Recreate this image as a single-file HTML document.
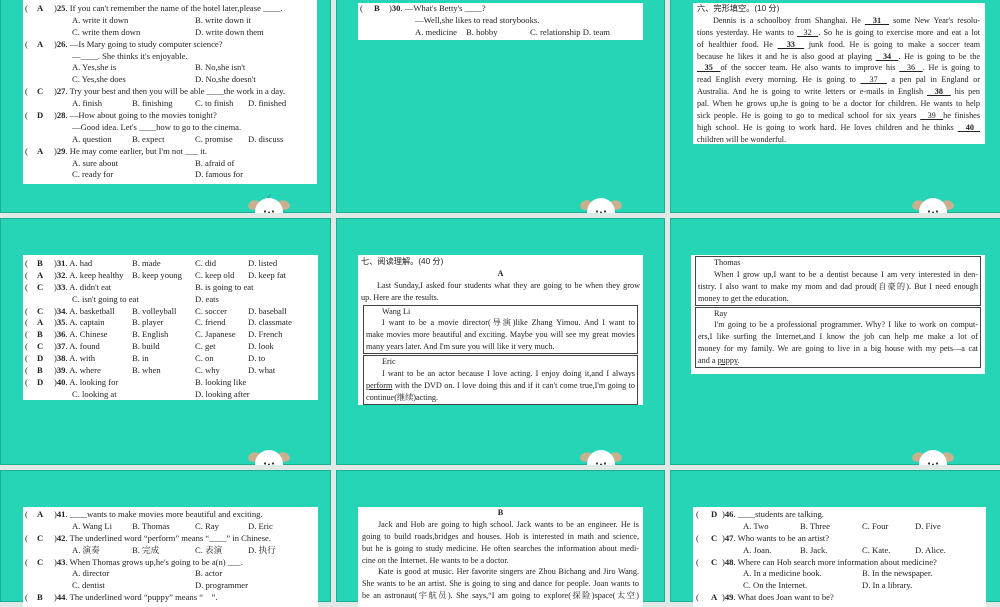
<!DOCTYPE html>
<html><head><meta charset="utf-8"><style>
*{margin:0;padding:0;box-sizing:border-box}
body{width:1000px;height:600px;background:#dfe9e6;position:relative;overflow:hidden;font-family:"Liberation Serif","Noto Serif CJK SC","Noto Sans CJK SC",serif;font-size:8px;color:#222}
.s{position:absolute;background:#26d5b5;border:1px solid #1fae94;overflow:hidden}
.b{position:absolute;background:#fff;padding-top:3px;overflow:hidden}
.r{position:relative;height:11.9px;line-height:11.9px;white-space:nowrap;font-size:8.6px}
.r span{position:absolute;top:0}
.j{height:11.9px;line-height:11.9px;text-align:justify;text-align-last:justify;white-space:nowrap;overflow:hidden;font-size:8.2px}
.n{text-align-last:left}
b{font-weight:bold}
.bx{border:1.5px solid #444;margin:1px 2px 0 2px;padding:0 2px}
.u{text-decoration:underline}
.dog{position:absolute;width:44px;height:18px}
</style></head><body>

<div class="s" style="left:0;top:-2px;width:331px;height:215px"></div>
<div class="s" style="left:336px;top:-2px;width:329px;height:215px"></div>
<div class="s" style="left:670px;top:-2px;width:332px;height:215px"></div>
<div class="s" style="left:0;top:218px;width:331px;height:247px"></div>
<div class="s" style="left:336px;top:218px;width:329px;height:247px"></div>
<div class="s" style="left:670px;top:218px;width:332px;height:247px"></div>
<div class="s" style="left:0;top:470px;width:331px;height:132px"></div>
<div class="s" style="left:336px;top:470px;width:329px;height:132px"></div>
<div class="s" style="left:670px;top:470px;width:332px;height:132px"></div>

<!-- slide1 -->
<div class="b" style="left:23px;top:0;width:294px;height:184px">
<div class="r"><span style="left:2px">(</span><span style="left:14px"><b>A</b></span><span style="left:31px">)<b>25</b>. If you can't remember the name of the hotel later,please ____.</span></div>
<div class="r"><span style="left:49px">A. write it down</span><span style="left:172px">B. write down it</span></div>
<div class="r"><span style="left:49px">C. write them down</span><span style="left:172px">D. write down them</span></div>
<div class="r"><span style="left:2px">(</span><span style="left:14px"><b>A</b></span><span style="left:31px">)<b>26</b>. —Is Mary going to study computer science?</span></div>
<div class="r"><span style="left:49px">—____. She thinks it's enjoyable.</span></div>
<div class="r"><span style="left:49px">A. Yes,she is</span><span style="left:172px">B. No,she isn't</span></div>
<div class="r"><span style="left:49px">C. Yes,she does</span><span style="left:172px">D. No,she doesn't</span></div>
<div class="r"><span style="left:2px">(</span><span style="left:14px"><b>C</b></span><span style="left:31px">)<b>27</b>. Try your best and then you will be able ____the work in a day.</span></div>
<div class="r"><span style="left:49px">A. finish</span><span style="left:109px">B. finishing</span><span style="left:172px">C. to finish</span><span style="left:225px">D. finished</span></div>
<div class="r"><span style="left:2px">(</span><span style="left:14px"><b>D</b></span><span style="left:31px">)<b>28</b>. —How about going to the movies tonight?</span></div>
<div class="r"><span style="left:49px">—Good idea. Let's ____how to go to the cinema.</span></div>
<div class="r"><span style="left:49px">A. question</span><span style="left:109px">B. expect</span><span style="left:172px">C. promise</span><span style="left:225px">D. discuss</span></div>
<div class="r"><span style="left:2px">(</span><span style="left:14px"><b>A</b></span><span style="left:31px">)<b>29</b>. He may come earlier, but I'm not ___ it.</span></div>
<div class="r"><span style="left:49px">A. sure about</span><span style="left:172px">B. afraid of</span></div>
<div class="r"><span style="left:49px">C. ready for</span><span style="left:172px">D. famous for</span></div>
</div>

<!-- slide2 -->
<div class="b" style="left:358px;top:3px;width:285px;height:37px;padding-top:0">
<div class="r"><span style="left:2px">(</span><span style="left:16px"><b>B</b></span><span style="left:31px">)<b>30</b>. —What's Betty's ____?</span></div>
<div class="r"><span style="left:57px">—Well,she likes to read storybooks.</span></div>
<div class="r"><span style="left:57px">A. medicine</span><span style="left:108px">B. hobby</span><span style="left:172px">C. relationship D. team</span></div>
</div>

<!-- slide3 -->
<div class="b" style="left:693px;top:3px;width:292px;height:141px;padding:0 5px 0 4px">
<div class="j n" style="font-family:'Liberation Sans','Noto Sans CJK SC',sans-serif">六、完形填空。(10 分)</div>
<div class="j" style="padding-left:16px">Dennis is a schoolboy from Shanghai. He <b class="u">&nbsp;&nbsp;31&nbsp;&nbsp;</b> some New Year's resolu-</div>
<div class="j">tions yesterday. He wants to <span class="u">&nbsp;&nbsp;32&nbsp;&nbsp;</span>. So he is going to exercise more and eat a lot</div>
<div class="j">of healthier food. He <b class="u">&nbsp;&nbsp;33&nbsp;&nbsp;</b> junk food. He is going to make a soccer team</div>
<div class="j">because he likes it and he is also good at playing <b class="u">&nbsp;&nbsp;34&nbsp;&nbsp;</b>. He is going to be the</div>
<div class="j"><b class="u">&nbsp;&nbsp;35&nbsp;&nbsp;</b>of the soccer team. He also wants to improve his <span class="u">&nbsp;&nbsp;36&nbsp;&nbsp;</span>. He is going to</div>
<div class="j">read English every morning. He is going to <span class="u">&nbsp;&nbsp;37&nbsp;&nbsp;</span> a pen pal in England or</div>
<div class="j">Australia. And he is going to write letters or e-mails in English <b class="u">&nbsp;&nbsp;38&nbsp;&nbsp;</b> his pen</div>
<div class="j">pal. When he grows up,he is going to be a doctor for children. He wants to help</div>
<div class="j">sick people. He is going to go to medical school for six years <span class="u">&nbsp;&nbsp;39&nbsp;&nbsp;</span>he finishes</div>
<div class="j">high school. He is going to work hard. He loves children and he thinks <b class="u">&nbsp;&nbsp;40&nbsp;&nbsp;</b></div>
<div class="j n">children will be wonderful.</div>
</div>

<!-- slide4 -->
<div class="b" style="left:23px;top:255px;width:295px;height:145px">
<div class="r"><span style="left:2px">(</span><span style="left:14px"><b>B</b></span><span style="left:31px">)<b>31</b>. A. had</span><span style="left:109px">B. made</span><span style="left:172px">C. did</span><span style="left:225px">D. listed</span></div>
<div class="r"><span style="left:2px">(</span><span style="left:14px"><b>A</b></span><span style="left:31px">)<b>32</b>. A. keep healthy</span><span style="left:109px">B. keep young</span><span style="left:172px">C. keep old</span><span style="left:225px">D. keep fat</span></div>
<div class="r"><span style="left:2px">(</span><span style="left:14px"><b>C</b></span><span style="left:31px">)<b>33</b>. A. didn't eat</span><span style="left:172px">B. is going to eat</span></div>
<div class="r"><span style="left:49px">C. isn't going to eat</span><span style="left:172px">D. eats</span></div>
<div class="r"><span style="left:2px">(</span><span style="left:14px"><b>C</b></span><span style="left:31px">)<b>34</b>. A. basketball</span><span style="left:109px">B. volleyball</span><span style="left:172px">C. soccer</span><span style="left:225px">D. baseball</span></div>
<div class="r"><span style="left:2px">(</span><span style="left:14px"><b>A</b></span><span style="left:31px">)<b>35</b>. A. captain</span><span style="left:109px">B. player</span><span style="left:172px">C. friend</span><span style="left:225px">D. classmate</span></div>
<div class="r"><span style="left:2px">(</span><span style="left:14px"><b>B</b></span><span style="left:31px">)<b>36</b>. A. Chinese</span><span style="left:109px">B. English</span><span style="left:172px">C. Japanese</span><span style="left:225px">D. French</span></div>
<div class="r"><span style="left:2px">(</span><span style="left:14px"><b>C</b></span><span style="left:31px">)<b>37</b>. A. found</span><span style="left:109px">B. build</span><span style="left:172px">C. get</span><span style="left:225px">D. look</span></div>
<div class="r"><span style="left:2px">(</span><span style="left:14px"><b>D</b></span><span style="left:31px">)<b>38</b>. A. with</span><span style="left:109px">B. in</span><span style="left:172px">C. on</span><span style="left:225px">D. to</span></div>
<div class="r"><span style="left:2px">(</span><span style="left:14px"><b>B</b></span><span style="left:31px">)<b>39</b>. A. where</span><span style="left:109px">B. when</span><span style="left:172px">C. why</span><span style="left:225px">D. what</span></div>
<div class="r"><span style="left:2px">(</span><span style="left:14px"><b>D</b></span><span style="left:31px">)<b>40</b>. A. looking for</span><span style="left:172px">B. looking like</span></div>
<div class="r"><span style="left:49px">C. looking at</span><span style="left:172px">D. looking after</span></div>
</div>

<!-- slide5 -->
<div class="b" style="left:358px;top:255px;width:285px;height:150px;padding:1px 3px 0 3px">
<div class="j n" style="font-family:'Liberation Sans','Noto Sans CJK SC',sans-serif">七、阅读理解。(40 分)</div>
<div class="j n" style="text-align:center;text-align-last:center"><b>A</b></div>
<div class="j" style="padding-left:16px">Last Sunday,I asked four students what they are going to be when they grow</div>
<div class="j n">up. Here are the results.</div>
<div class="bx">
<div class="j n" style="padding-left:16px">Wang Li</div>
<div class="j" style="padding-left:16px">I want to be a movie director(导演)like Zhang Yimou. And I want to</div>
<div class="j">make movies more beautiful and exciting. Maybe you will see my great movies</div>
<div class="j n">many years later. And I'm sure you will like it very much.</div>
</div>
<div class="bx">
<div class="j n" style="padding-left:16px">Eric</div>
<div class="j" style="padding-left:16px">I want to be an actor because I love acting. I enjoy doing it,and I always</div>
<div class="j"><span class="u">perform</span> with the DVD on. I love doing this and if it can't come true,I'm going to</div>
<div class="j n">continue(继续)acting.</div>
</div>
</div>

<!-- slide6 -->
<div class="b" style="left:691px;top:255px;width:294px;height:119px;padding:0 2px">
<div class="bx" style="margin-top:1px">
<div class="j n" style="padding-left:16px">Thomas</div>
<div class="j" style="padding-left:16px">When I grow up,I want to be a dentist because I am very interested in den-</div>
<div class="j">tistry. I also want to make my mom and dad proud(自豪的). But I need enough</div>
<div class="j n">money to get the education.</div>
</div>
<div class="bx">
<div class="j n" style="padding-left:16px">Ray</div>
<div class="j" style="padding-left:16px">I'm going to be a professional programmer. Why? I like to work on comput-</div>
<div class="j">ers,I like surfing the Internet,and I know the job can help me make a lot of</div>
<div class="j">money for my family. We are going to live in a big house with my pets—a cat</div>
<div class="j n">and a <span class="u">puppy</span>.</div>
</div>
</div>

<!-- slide7 -->
<div class="b" style="left:23px;top:507px;width:295px;height:100px;padding-top:2px">
<div class="r"><span style="left:2px">(</span><span style="left:14px"><b>A</b></span><span style="left:31px">)<b>41</b>. ____wants to make movies more beautiful and exciting.</span></div>
<div class="r"><span style="left:49px">A. Wang Li</span><span style="left:109px">B. Thomas</span><span style="left:172px">C. Ray</span><span style="left:225px">D. Eric</span></div>
<div class="r"><span style="left:2px">(</span><span style="left:14px"><b>C</b></span><span style="left:31px">)<b>42</b>. The underlined word “perform” means “____” in Chinese.</span></div>
<div class="r"><span style="left:49px">A. 演奏</span><span style="left:109px">B. 完成</span><span style="left:172px">C. 表演</span><span style="left:225px">D. 执行</span></div>
<div class="r"><span style="left:2px">(</span><span style="left:14px"><b>C</b></span><span style="left:31px">)<b>43</b>. When Thomas grows up,he's going to be a(n) ___.</span></div>
<div class="r"><span style="left:49px">A. director</span><span style="left:172px">B. actor</span></div>
<div class="r"><span style="left:49px">C. dentist</span><span style="left:172px">D. programmer</span></div>
<div class="r"><span style="left:2px">(</span><span style="left:14px"><b>B</b></span><span style="left:31px">)<b>44</b>. The underlined word “puppy” means “&nbsp;&nbsp;&nbsp;&nbsp;”.</span></div>
</div>

<!-- slide8 -->
<div class="b" style="left:358px;top:507px;width:285px;height:100px;padding:0 4px">
<div class="j n" style="text-align:center;text-align-last:center"><b>B</b></div>
<div class="j" style="padding-left:16px">Jack and Hob are going to high school. Jack wants to be an engineer. He is</div>
<div class="j">going to build roads,bridges and houses. Hob is interested in math and science,</div>
<div class="j">but he is going to study medicine. He often searches the information about medi-</div>
<div class="j n">cine on the Internet. He wants to be a doctor.</div>
<div class="j" style="padding-left:16px">Kate is good at music. Her favorite singers are Zhou Bichang and Jiro Wang.</div>
<div class="j">She wants to be an artist. She is going to sing and dance for people. Joan wants to</div>
<div class="j">be an astronaut(宇航员). She says,“I am going to explore(探险)space(太空)</div>
</div>

<!-- slide9 -->
<div class="b" style="left:693px;top:507px;width:293px;height:100px;padding-top:2px">
<div class="r"><span style="left:3px">(</span><span style="left:18px"><b>D</b></span><span style="left:29px">)<b>46</b>. ____students are talking.</span></div>
<div class="r"><span style="left:50px">A. Two</span><span style="left:107px">B. Three</span><span style="left:169px">C. Four</span><span style="left:222px">D. Five</span></div>
<div class="r"><span style="left:3px">(</span><span style="left:18px"><b>C</b></span><span style="left:29px">)<b>47</b>. Who wants to be an artist?</span></div>
<div class="r"><span style="left:50px">A. Joan.</span><span style="left:107px">B. Jack.</span><span style="left:169px">C. Kate.</span><span style="left:222px">D. Alice.</span></div>
<div class="r"><span style="left:3px">(</span><span style="left:18px"><b>C</b></span><span style="left:29px">)<b>48</b>. Where can Hob search more information about medicine?</span></div>
<div class="r"><span style="left:50px">A. In a medicine book.</span><span style="left:169px">B. In the newspaper.</span></div>
<div class="r"><span style="left:50px">C. On the Internet.</span><span style="left:169px">D. In a library.</span></div>
<div class="r"><span style="left:3px">(</span><span style="left:18px"><b>A</b></span><span style="left:29px">)<b>49</b>. What does Joan want to be?</span></div>
</div>

<!-- mascots -->
<svg class="dog" style="left:247px;top:195px" viewBox="0 0 44 18"><ellipse cx="7" cy="10" rx="6" ry="4.5" fill="#c9b08e" transform="rotate(-20 7 10)"/><ellipse cx="37" cy="10" rx="6" ry="4.5" fill="#c9b08e" transform="rotate(20 37 10)"/><circle cx="22" cy="17" r="14" fill="#fff"/><path d="M21 3 q1-3 3-3" stroke="#666" stroke-width="0.6" fill="none"/><circle cx="18" cy="16.5" r="1.1" fill="#333"/><circle cx="26" cy="16.5" r="1.1" fill="#333"/><circle cx="22" cy="17.5" r="1" fill="#333"/></svg>
<svg class="dog" style="left:579px;top:195px" viewBox="0 0 44 18"><ellipse cx="7" cy="10" rx="6" ry="4.5" fill="#c9b08e" transform="rotate(-20 7 10)"/><ellipse cx="37" cy="10" rx="6" ry="4.5" fill="#c9b08e" transform="rotate(20 37 10)"/><circle cx="22" cy="17" r="14" fill="#fff"/><circle cx="18" cy="16.5" r="1.1" fill="#333"/><circle cx="26" cy="16.5" r="1.1" fill="#333"/><circle cx="22" cy="17.5" r="1" fill="#333"/></svg>
<svg class="dog" style="left:911px;top:195px" viewBox="0 0 44 18"><ellipse cx="7" cy="10" rx="6" ry="4.5" fill="#c9b08e" transform="rotate(-20 7 10)"/><ellipse cx="37" cy="10" rx="6" ry="4.5" fill="#c9b08e" transform="rotate(20 37 10)"/><circle cx="22" cy="17" r="14" fill="#fff"/><circle cx="18" cy="16.5" r="1.1" fill="#333"/><circle cx="26" cy="16.5" r="1.1" fill="#333"/><circle cx="22" cy="17.5" r="1" fill="#333"/></svg>
<svg class="dog" style="left:247px;top:447px" viewBox="0 0 44 18"><ellipse cx="7" cy="10" rx="6" ry="4.5" fill="#c9b08e" transform="rotate(-20 7 10)"/><ellipse cx="37" cy="10" rx="6" ry="4.5" fill="#c9b08e" transform="rotate(20 37 10)"/><circle cx="22" cy="17" r="14" fill="#fff"/><circle cx="18" cy="16.5" r="1.1" fill="#333"/><circle cx="26" cy="16.5" r="1.1" fill="#333"/><circle cx="22" cy="17.5" r="1" fill="#333"/></svg>
<svg class="dog" style="left:579px;top:447px" viewBox="0 0 44 18"><ellipse cx="7" cy="10" rx="6" ry="4.5" fill="#c9b08e" transform="rotate(-20 7 10)"/><ellipse cx="37" cy="10" rx="6" ry="4.5" fill="#c9b08e" transform="rotate(20 37 10)"/><circle cx="22" cy="17" r="14" fill="#fff"/><circle cx="18" cy="16.5" r="1.1" fill="#333"/><circle cx="26" cy="16.5" r="1.1" fill="#333"/><circle cx="22" cy="17.5" r="1" fill="#333"/></svg>
<svg class="dog" style="left:911px;top:447px" viewBox="0 0 44 18"><ellipse cx="7" cy="10" rx="6" ry="4.5" fill="#c9b08e" transform="rotate(-20 7 10)"/><ellipse cx="37" cy="10" rx="6" ry="4.5" fill="#c9b08e" transform="rotate(20 37 10)"/><circle cx="22" cy="17" r="14" fill="#fff"/><circle cx="18" cy="16.5" r="1.1" fill="#333"/><circle cx="26" cy="16.5" r="1.1" fill="#333"/><circle cx="22" cy="17.5" r="1" fill="#333"/></svg>
</body></html>
